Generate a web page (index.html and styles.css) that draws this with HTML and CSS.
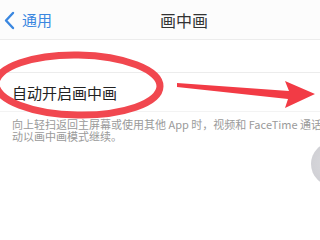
FILE: index.html
```html
<!DOCTYPE html>
<html lang="zh-CN">
  <head>
    <meta charset="UTF-8" />
    <meta name="viewport" content="width=device-width, initial-scale=1.0" />
    <title>画中画</title>
    <link rel="stylesheet" href="styles.css">
  </head>
  <body>
    <div class="screen">
      <!-- Navigation bar -->
      <header class="nav-bar">
        <a class="back" href="#">
          <svg class="chevron" width="12" height="20" viewBox="0 0 12 20">
            <path d="M10 3 L3 10.5 L10 18" fill="none" stroke="#3a87e0" stroke-width="2.4" stroke-linecap="round" stroke-linejoin="round" />
          </svg>
          <span>通用</span>
        </a>
        <h1 class="title">画中画</h1>
        <span></span>
      </header>

      <!-- Settings group -->
      <main class="group">
        <div class="row">
          <span class="row-label">自动开启画中画</span>
        </div>
        <p class="footer-note">向上轻扫返回主屏幕或使用其他 App 时，视频和 FaceTime 通话会自<br>动以画中画模式继续。</p>
      </main>

      <!-- Annotation marks drawn over the screenshot -->
      <svg class="marks" width="320" height="240" viewBox="0 0 320 240">
        <ellipse cx="78" cy="85" rx="82" ry="30" fill="none" stroke="#f1474f" stroke-width="7" transform="rotate(1 78 85)" />
        <polygon points="177,83 289,91 285,81 315,94 285,108 288,99 177,87" fill="#f23b45" />
      </svg>
      <div class="knob"></div>
    </div>
  </body>
</html>
```

FILE: styles.css
```css
body {
  margin: 0;
  padding: 0;
  background: #fff;
  overflow: hidden;
  font-family: "Noto Sans CJK SC", "Noto Sans", sans-serif;
}
.screen {
  position: relative;
  width: 368px;
  height: 240px;
  background: #fff;
}
/* Navigation bar */
.nav-bar {
  height: 39px;
  display: grid;
  grid-template-columns: 1fr auto 1fr;
  align-items: center;
  background: #fcfcfc;
  border-bottom: 1px solid #ececec;
}
.back {
  display: flex;
  align-items: center;
  gap: 7px;
  padding-left: 3px;
  color: #3a87e0;
  text-decoration: none;
  font-size: 15px;
}
.chevron {
  display: block;
}
.title {
  margin: 0;
  font-size: 16px;
  font-weight: 400;
  color: #333;
}
/* Settings group */
.group {
  margin-top: 32px;
}
.row {
  height: 38px;
  display: flex;
  align-items: center;
  padding-left: 12px;
  background: #fff;
  border-top: 1px solid #ececec;
  border-bottom: 1px solid #f3f3f3;
}
.row-label {
  font-size: 15px;
  color: #222;
}
.footer-note {
  margin: 0;
  padding: 6px 12px 0;
  font-size: 11px;
  line-height: 12px;
  color: #9a9a9a;
  white-space: nowrap;
}
.marks {
  position: absolute;
  left: 0;
  top: 0;
}
.knob {
  position: absolute;
  left: 311px;
  top: 142px;
  width: 44px;
  height: 44px;
  border-radius: 50%;
  background: radial-gradient(circle at 40% 50%, #d9d9dd, #c9c9ce);
}
```
